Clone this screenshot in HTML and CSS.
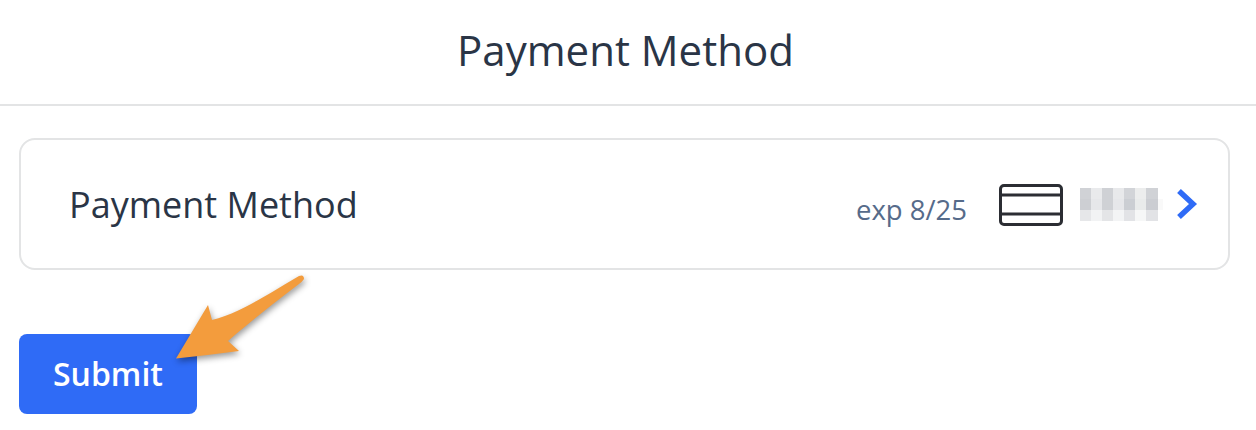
FILE: index.html
```html
<html>
    <head>
        <meta charset="utf-8">
        <link rel="stylesheet" href="styles.css">
    </head>
    <body>
        <header class="page-header">
            <h1>Payment Method</h1>
        </header>

        <section class="content">
            <div class="method-card">
                <span class="method-label">Payment Method</span>
                <div class="method-info">
                    <span class="method-exp">exp 8/25</span>
                    <svg class="card-icon" width="64" height="42" viewBox="0 0 64 42">
                        <rect x="1.5" y="1.5" width="61" height="39" rx="3.5" fill="none" stroke="#2b2d33" stroke-width="3"/>
                        <path d="M1 11h62M1 30h62" stroke="#2b2d33" stroke-width="3"/>
                    </svg>
                    <svg class="card-number" width="86" height="33" viewBox="0 0 86 33">
                        <rect width="11" height="11" fill="#d0d2d6"/>
                        <rect x="11" width="11" height="11" fill="#e9eaec"/>
                        <rect x="22" width="11" height="11" fill="#cfd1d5"/>
                        <rect x="33" width="11" height="11" fill="#e8e9eb"/>
                        <rect x="44" width="11" height="11" fill="#d2d4d8"/>
                        <rect x="55" width="11" height="11" fill="#eceded"/>
                        <rect x="66" width="12" height="11" fill="#d0d2d6"/>
                        <rect y="11" width="11" height="11" fill="#cdcfd3"/>
                        <rect x="11" y="11" width="11" height="11" fill="#e6e7ea"/>
                        <rect x="22" y="11" width="11" height="11" fill="#cfd1d5"/>
                        <rect x="33" y="11" width="11" height="11" fill="#e6e7ea"/>
                        <rect x="44" y="11" width="11" height="11" fill="#cbced3"/>
                        <rect x="55" y="11" width="11" height="11" fill="#e9ebeb"/>
                        <rect x="66" y="11" width="12" height="11" fill="#cbcdd2"/>
                        <rect x="78" y="11" width="5" height="11" fill="#f9f9f9"/>
                        <rect y="22" width="11" height="11" fill="#e6e7e9"/>
                        <rect x="11" y="22" width="11" height="11" fill="#f2f3f4"/>
                        <rect x="22" y="22" width="11" height="11" fill="#e4e5e7"/>
                        <rect x="33" y="22" width="11" height="11" fill="#f3f4f5"/>
                        <rect x="44" y="22" width="11" height="11" fill="#e2e3e6"/>
                        <rect x="55" y="22" width="11" height="11" fill="#f6f7f7"/>
                        <rect x="66" y="22" width="12" height="11" fill="#e2e3e6"/>
                    </svg>
                    <svg class="chevron" width="22" height="32" viewBox="0 0 22 32">
                        <path d="M3 3l14 13L3 29" fill="none" stroke="#2f6bf6" stroke-width="5.5"/>
                    </svg>
                </div>
            </div>

            <button class="submit-btn">Submit</button>
        </section>

        <svg class="callout-arrow" width="1256" height="430" viewBox="0 0 1256 430">
            <path d="M176 358.5L208 305L212 320C240 313 270 293 299 276Q304 274 304 279Q302 282 299 284C275 302 250 322 228 341L239 351C218 354 197 356 176 358.5Z" fill="#f39c3d"/>
        </svg>
    </body>
</html>
```

FILE: styles.css
```css
* { box-sizing: border-box; }

html, body {
    margin: 0;
    padding: 0;
    background: #fff;
    font-family: "Open Sans", sans-serif;
}

.page-header {
    height: 106px;
    display: flex;
    align-items: center;
    justify-content: center;
    padding: 0 5px 6px 0;
    border-bottom: 2px solid #e3e4e5;
}

.page-header h1 {
    margin: 0;
    font-size: 42px;
    font-weight: 400;
    color: #2a3546;
}

.content { padding: 32px 26px 0 19px; }

.method-card {
    width: 1211px;
    height: 132px;
    display: flex;
    align-items: center;
    justify-content: space-between;
    padding: 0 30px 0 48px;
    border: 2px solid #e3e4e5;
    border-radius: 16px;
}

.method-label {
    font-size: 36px;
    color: #2a3546;
}

.method-info {
    display: flex;
    align-items: center;
}

.method-exp {
    margin: 11px 32px 0 0;
    font-size: 27.5px;
    color: #566b8a;
}

.card-icon { margin-top: 2px; }
.card-number { margin-left: 17px; }
.chevron { margin-left: 10px; }

.submit-btn {
    display: block;
    width: 178px;
    height: 80px;
    margin-top: 64px;
    padding: 0 0 2px;
    border: 0;
    border-radius: 8px;
    background: #2f6bf6;
    color: #fff;
    font-family: inherit;
    font-size: 32px;
    font-weight: 600;
}

.callout-arrow {
    position: absolute;
    top: 0;
    left: 0;
    filter: drop-shadow(1px 3px 3px #0006);
}
```
